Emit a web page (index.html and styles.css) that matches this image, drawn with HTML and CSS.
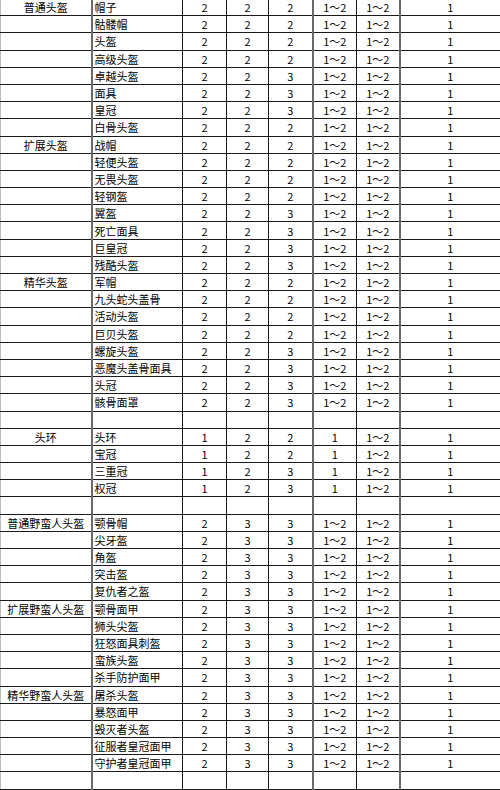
FILE: index.html
```html
<!DOCTYPE html>
<html lang="zh">
<head>
<meta charset="utf-8">
<title>头盔</title>
<link rel="stylesheet" href="styles.css">
</head>
<body>
<table class="grid">
<colgroup>
<col class="c1"><col class="c2"><col class="c3"><col class="c4"><col class="c5"><col class="c6"><col class="c7"><col class="c8">
</colgroup>
<tbody>
<tr><td class="grp">普通头盔</td><td class="name">帽子</td><td>2</td><td>2</td><td>2</td><td class="tk">1～2</td><td>1～2</td><td class="tk">1</td></tr>
<tr><td class="grp"></td><td class="name">骷髅帽</td><td>2</td><td>2</td><td>2</td><td class="tk">1～2</td><td>1～2</td><td class="tk">1</td></tr>
<tr><td class="grp"></td><td class="name">头盔</td><td>2</td><td>2</td><td>2</td><td class="tk">1～2</td><td>1～2</td><td class="tk">1</td></tr>
<tr><td class="grp"></td><td class="name">高级头盔</td><td>2</td><td>2</td><td>2</td><td class="tk">1～2</td><td>1～2</td><td class="tk">1</td></tr>
<tr><td class="grp"></td><td class="name">卓越头盔</td><td>2</td><td>2</td><td>3</td><td class="tk">1～2</td><td>1～2</td><td class="tk">1</td></tr>
<tr><td class="grp"></td><td class="name">面具</td><td>2</td><td>2</td><td>3</td><td class="tk">1～2</td><td>1～2</td><td class="tk">1</td></tr>
<tr><td class="grp"></td><td class="name">皇冠</td><td>2</td><td>2</td><td>3</td><td class="tk">1～2</td><td>1～2</td><td class="tk">1</td></tr>
<tr><td class="grp"></td><td class="name">白骨头盔</td><td>2</td><td>2</td><td>2</td><td class="tk">1～2</td><td>1～2</td><td class="tk">1</td></tr>
<tr><td class="grp">扩展头盔</td><td class="name">战帽</td><td>2</td><td>2</td><td>2</td><td class="tk">1～2</td><td>1～2</td><td class="tk">1</td></tr>
<tr><td class="grp"></td><td class="name">轻便头盔</td><td>2</td><td>2</td><td>2</td><td class="tk">1～2</td><td>1～2</td><td class="tk">1</td></tr>
<tr><td class="grp"></td><td class="name">无畏头盔</td><td>2</td><td>2</td><td>2</td><td class="tk">1～2</td><td>1～2</td><td class="tk">1</td></tr>
<tr><td class="grp"></td><td class="name">轻钢盔</td><td>2</td><td>2</td><td>2</td><td class="tk">1～2</td><td>1～2</td><td class="tk">1</td></tr>
<tr><td class="grp"></td><td class="name">翼盔</td><td>2</td><td>2</td><td>3</td><td class="tk">1～2</td><td>1～2</td><td class="tk">1</td></tr>
<tr><td class="grp"></td><td class="name">死亡面具</td><td>2</td><td>2</td><td>3</td><td class="tk">1～2</td><td>1～2</td><td class="tk">1</td></tr>
<tr><td class="grp"></td><td class="name">巨皇冠</td><td>2</td><td>2</td><td>3</td><td class="tk">1～2</td><td>1～2</td><td class="tk">1</td></tr>
<tr><td class="grp"></td><td class="name">残酷头盔</td><td>2</td><td>2</td><td>3</td><td class="tk">1～2</td><td>1～2</td><td class="tk">1</td></tr>
<tr><td class="grp">精华头盔</td><td class="name">军帽</td><td>2</td><td>2</td><td>2</td><td class="tk">1～2</td><td>1～2</td><td class="tk">1</td></tr>
<tr><td class="grp"></td><td class="name">九头蛇头盖骨</td><td>2</td><td>2</td><td>2</td><td class="tk">1～2</td><td>1～2</td><td class="tk">1</td></tr>
<tr><td class="grp"></td><td class="name">活动头盔</td><td>2</td><td>2</td><td>2</td><td class="tk">1～2</td><td>1～2</td><td class="tk">1</td></tr>
<tr><td class="grp"></td><td class="name">巨贝头盔</td><td>2</td><td>2</td><td>2</td><td class="tk">1～2</td><td>1～2</td><td class="tk">1</td></tr>
<tr><td class="grp"></td><td class="name">螺旋头盔</td><td>2</td><td>2</td><td>3</td><td class="tk">1～2</td><td>1～2</td><td class="tk">1</td></tr>
<tr><td class="grp"></td><td class="name">恶魔头盖骨面具</td><td>2</td><td>2</td><td>3</td><td class="tk">1～2</td><td>1～2</td><td class="tk">1</td></tr>
<tr><td class="grp"></td><td class="name">头冠</td><td>2</td><td>2</td><td>3</td><td class="tk">1～2</td><td>1～2</td><td class="tk">1</td></tr>
<tr><td class="grp"></td><td class="name">骸骨面罩</td><td>2</td><td>2</td><td>3</td><td class="tk">1～2</td><td>1～2</td><td class="tk">1</td></tr>
<tr><td class="grp"></td><td class="name"></td><td></td><td></td><td></td><td class="tk"></td><td></td><td class="tk"></td></tr>
<tr><td class="grp">头环</td><td class="name">头环</td><td>1</td><td>2</td><td>2</td><td class="tk">1</td><td>1～2</td><td class="tk">1</td></tr>
<tr><td class="grp"></td><td class="name">宝冠</td><td>1</td><td>2</td><td>2</td><td class="tk">1</td><td>1～2</td><td class="tk">1</td></tr>
<tr><td class="grp"></td><td class="name">三重冠</td><td>1</td><td>2</td><td>3</td><td class="tk">1</td><td>1～2</td><td class="tk">1</td></tr>
<tr><td class="grp"></td><td class="name">权冠</td><td>1</td><td>2</td><td>3</td><td class="tk">1</td><td>1～2</td><td class="tk">1</td></tr>
<tr><td class="grp"></td><td class="name"></td><td></td><td></td><td></td><td class="tk"></td><td></td><td class="tk"></td></tr>
<tr><td class="grp">普通野蛮人头盔</td><td class="name">颚骨帽</td><td>2</td><td>3</td><td>3</td><td class="tk">1～2</td><td>1～2</td><td class="tk">1</td></tr>
<tr><td class="grp"></td><td class="name">尖牙盔</td><td>2</td><td>3</td><td>3</td><td class="tk">1～2</td><td>1～2</td><td class="tk">1</td></tr>
<tr><td class="grp"></td><td class="name">角盔</td><td>2</td><td>3</td><td>3</td><td class="tk">1～2</td><td>1～2</td><td class="tk">1</td></tr>
<tr><td class="grp"></td><td class="name">突击盔</td><td>2</td><td>3</td><td>3</td><td class="tk">1～2</td><td>1～2</td><td class="tk">1</td></tr>
<tr><td class="grp"></td><td class="name">复仇者之盔</td><td>2</td><td>3</td><td>3</td><td class="tk">1～2</td><td>1～2</td><td class="tk">1</td></tr>
<tr><td class="grp">扩展野蛮人头盔</td><td class="name">颚骨面甲</td><td>2</td><td>3</td><td>3</td><td class="tk">1～2</td><td>1～2</td><td class="tk">1</td></tr>
<tr><td class="grp"></td><td class="name">狮头尖盔</td><td>2</td><td>3</td><td>3</td><td class="tk">1～2</td><td>1～2</td><td class="tk">1</td></tr>
<tr><td class="grp"></td><td class="name">狂怒面具刺盔</td><td>2</td><td>3</td><td>3</td><td class="tk">1～2</td><td>1～2</td><td class="tk">1</td></tr>
<tr><td class="grp"></td><td class="name">蛮族头盔</td><td>2</td><td>3</td><td>3</td><td class="tk">1～2</td><td>1～2</td><td class="tk">1</td></tr>
<tr><td class="grp"></td><td class="name">杀手防护面甲</td><td>2</td><td>3</td><td>3</td><td class="tk">1～2</td><td>1～2</td><td class="tk">1</td></tr>
<tr><td class="grp">精华野蛮人头盔</td><td class="name">屠杀头盔</td><td>2</td><td>3</td><td>3</td><td class="tk">1～2</td><td>1～2</td><td class="tk">1</td></tr>
<tr><td class="grp"></td><td class="name">暴怒面甲</td><td>2</td><td>3</td><td>3</td><td class="tk">1～2</td><td>1～2</td><td class="tk">1</td></tr>
<tr><td class="grp"></td><td class="name">毁灭者头盔</td><td>2</td><td>3</td><td>3</td><td class="tk">1～2</td><td>1～2</td><td class="tk">1</td></tr>
<tr><td class="grp"></td><td class="name">征服者皇冠面甲</td><td>2</td><td>3</td><td>3</td><td class="tk">1～2</td><td>1～2</td><td class="tk">1</td></tr>
<tr><td class="grp"></td><td class="name">守护者皇冠面甲</td><td>2</td><td>3</td><td>3</td><td class="tk">1～2</td><td>1～2</td><td class="tk">1</td></tr>
<tr><td class="grp"></td><td class="name"></td><td></td><td></td><td></td><td class="tk"></td><td></td><td class="tk"></td></tr>
</tbody>
</table>
</body>
</html>
```
FILE: styles.css
```css
html, body {
  margin: 0;
  padding: 0;
  background: #fff;
}
body {
  width: 500px;
  height: 790px;
  overflow: hidden;
  font-family: "Noto Sans CJK SC", "DejaVu Sans", sans-serif;
  font-size: 11px;
  color: #000;
}
.grid {
  width: 500px;
  margin-top: -2px;
  border-collapse: collapse;
  table-layout: fixed;
}
.c1 { width: 91px; }
.c2 { width: 91px; }
.c3 { width: 44px; }
.c4 { width: 42px; }
.c5 { width: 44px; }
.c6 { width: 44px; }
.c7 { width: 43px; }
.c8 { width: 101px; }
.grid tr {
  height: 17.2px;
}
.grid td {
  border: 1px solid #1a1a1a;
  padding: 0;
  height: 16.2px;
  line-height: 14px;
  text-align: center;
  vertical-align: middle;
  white-space: nowrap;
  overflow: hidden;
}
.grid td.name {
  text-align: left;
  padding-left: 2px;
  border-left: 2px solid #6a6a6a;
}
.grid td.tk {
  border-left: 2px solid #6a6a6a;
}
.grid td.grp {
  border-left: 1px solid #bbb;
}
```
